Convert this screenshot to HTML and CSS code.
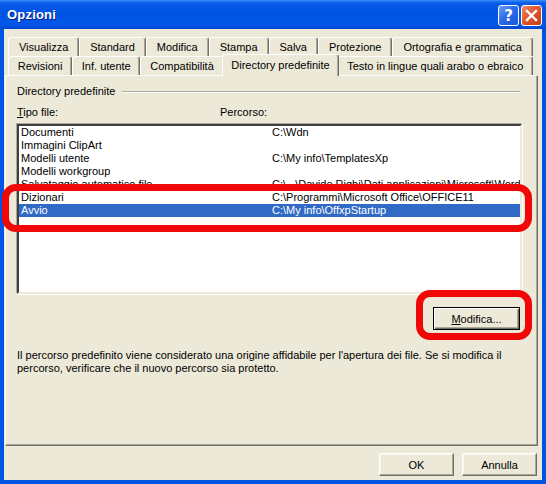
FILE: index.html
```html
<!DOCTYPE html>
<html lang="it">
<head>
<meta charset="utf-8">
<title>Opzioni</title>
<link rel="stylesheet" href="styles.css">
</head>
<body>
<div class="window">
  <div class="titlebar">
    <span class="title">Opzioni</span>
    <div class="title-btns">
      <span class="tbtn help">?</span>
      <span class="tbtn close"><svg width="13" height="13" viewBox="0 0 13 13"><path d="M2 2 L11 11 M11 2 L2 11" stroke="#fff" stroke-width="2.4" stroke-linecap="square"/></svg></span>
    </div>
  </div>
  <div class="frame">
    <div class="body">
      <div class="tabs">
        <div class="tabrow">
          <div class="tab">Visualizza</div>
          <div class="tab">Standard</div>
          <div class="tab">Modifica</div>
          <div class="tab">Stampa</div>
          <div class="tab">Salva</div>
          <div class="tab">Protezione</div>
          <div class="tab">Ortografia e grammatica</div>
        </div>
        <div class="tabrow">
          <div class="tab">Revisioni</div>
          <div class="tab">Inf. utente</div>
          <div class="tab">Compatibilità</div>
          <div class="tab active">Directory predefinite</div>
          <div class="tab">Testo in lingue quali arabo o ebraico</div>
        </div>
      </div>
      <div class="panel">
        <div class="group"><span>Directory predefinite</span><span class="rule"></span></div>
        <div class="headers"><span><u>T</u>ipo file:</span><span>Percorso:</span></div>
        <div class="list">
          <div class="row"><span>Documenti</span><span>C:\Wdn</span></div>
          <div class="row"><span>Immagini ClipArt</span><span></span></div>
          <div class="row"><span>Modelli utente</span><span>C:\My info\TemplatesXp</span></div>
          <div class="row"><span>Modelli workgroup</span><span></span></div>
          <div class="row"><span>Salvataggio automatico file</span><span>C:\...\Davide Righi\Dati applicazioni\Microsoft\Word</span></div>
          <div class="row"><span>Dizionari</span><span>C:\Programmi\Microsoft Office\OFFICE11</span></div>
          <div class="row selected"><span>Avvio</span><span>C:\My info\OffxpStartup</span></div>
        </div>
        <div class="actions"><button class="btn default wide"><u>M</u>odifica...</button></div>
        <p class="info">Il percorso predefinito viene considerato una origine affidabile per l'apertura dei file. Se si modifica il<br>percorso, verificare che il nuovo percorso sia protetto.</p>
      </div>
      <div class="footer">
        <button class="btn">OK</button>
        <button class="btn">Annulla</button>
      </div>
    </div>
  </div>
  <div class="mark mark-list"></div>
  <div class="mark mark-btn"></div>
</div>
</body>
</html>
```
FILE: styles.css
```css
* { box-sizing: border-box; margin: 0; padding: 0; }
html, body { width: 546px; height: 484px; overflow: hidden; }
body {
  font-family: "Liberation Sans", Arial, sans-serif;
  font-size: 11px;
  color: #000;
  background: #ECE9D8;
}
.window {
  position: relative;
  width: 546px;
  height: 484px;
  display: flex;
  flex-direction: column;
  background: #0054E3;
}
.titlebar {
  height: 29px;
  flex: 0 0 29px;
  display: flex;
  align-items: center;
  justify-content: space-between;
  padding: 0 4px 0 7px;
  background: linear-gradient(180deg, #3C8EF8 0%, #0A5CEB 10%, #0054E3 45%, #0257E8 85%, #0047D0 100%);
}
.title {
  color: #fff;
  font-weight: bold;
  font-size: 13px;
  text-shadow: 1px 1px 0 #0A1E8C;
  letter-spacing: 0.2px;
}
.title-btns { display: flex; gap: 2px; margin-top: 2px; }
.tbtn {
  width: 21px;
  height: 21px;
  border: 1px solid #fff;
  border-radius: 3px;
  display: flex;
  align-items: center;
  justify-content: center;
  color: #fff;
}
.help {
  background: linear-gradient(135deg, #6FA2F7 0%, #2B6BE6 45%, #1A56D8 100%);
  font-weight: bold;
  font-size: 15px;
  font-family: "DejaVu Sans", sans-serif;
}
.close {
  background: linear-gradient(135deg, #F0906E 0%, #E0552C 45%, #C83C14 100%);
}
.frame {
  flex: 1;
  display: flex;
  padding: 0 4px 4px 4px;
  background: #0054E3;
  min-width: 0;
}
.body {
  flex: 1;
  min-width: 0;
  overflow: hidden;
  display: flex;
  flex-direction: column;
  background: #ECE9D8;
  padding: 8px 4px 4px 1px;
}
.tabs { padding: 0 5px 0 3px; }
.tabrow { display: flex; height: 19px; }
.tab {
  flex: 1 1 auto;
  min-width: 0;
  white-space: nowrap;
  text-align: center;
  line-height: 17px;
  padding: 1px 3px 0;
  background: #ECE9D8;
  border-top: 1px solid #fff;
  border-left: 1px solid #fff;
  border-right: 1px solid #716F64;
  box-shadow: inset -1px 0 0 #ACA899;
  border-radius: 3px 3px 0 0;
}
.tab.active {
  position: relative;
  z-index: 1;
  margin: -2px -2px -1px;
  height: 22px;
  padding-top: 2px;
}
.panel {
  flex: 0 0 371px;
  border: 1px solid;
  border-color: #fff #716F64 #716F64 #fff;
  box-shadow: inset -1px -1px 0 #ACA899;
  padding: 9px 15px 0 11px;
  display: flex;
  flex-direction: column;
}
.group { display: flex; align-items: center; height: 13px; line-height: 13px; }
.group .rule {
  flex: 1;
  margin: 1px 2px 0 7px;
  border-top: 1px solid #ACA899;
  border-bottom: 1px solid #fff;
}
.headers {
  margin-top: 8px;
  height: 13px;
  line-height: 13px;
  display: grid;
  grid-template-columns: 203px 1fr;
}
.list {
  margin-top: 5px;
  height: 170px;
  background: #fff;
  border: 2px solid;
  border-color: #404040 #ECE9D8 #ECE9D8 #404040;
  box-shadow: 1px 1px 0 #fff, -1px -1px 0 #ACA899;
  overflow: hidden;
}
.row {
  display: grid;
  grid-template-columns: 251px 1fr;
  height: 13px;
  line-height: 13px;
  padding-left: 2px;
  white-space: nowrap;
  overflow: hidden;
}
.row.selected { background: #316AC5; color: #fff; }
.actions {
  margin-top: 13px;
  display: flex;
  justify-content: flex-end;
  padding-right: 2px;
}
.btn {
  width: 75px;
  height: 23px;
  font-family: "Liberation Sans", Arial, sans-serif;
  font-size: 11px;
  color: #000;
  background: #ECE9D8;
  border: 1px solid;
  border-color: #fff #716F64 #716F64 #fff;
  box-shadow: inset -1px -1px 0 #ACA899, inset 1px 1px 0 #F5F4EE;
}
.btn.wide { width: 87px; }
.btn.default {
  border: 1px solid #000;
  box-shadow: inset 1px 1px 0 #fff, inset -1px -1px 0 #716F64, inset -2px -2px 0 #ACA899;
}
.info {
  margin-top: 19px;
  line-height: 13px;
  white-space: nowrap;
}
.footer {
  margin-top: 7px;
  display: flex;
  justify-content: flex-end;
  gap: 8px;
  padding-right: 1px;
}
.mark {
  position: absolute;
  border: 7px solid #F00808;
  border-radius: 14px;
  pointer-events: none;
}
.mark-list { left: 2px; top: 184px; width: 530px; height: 48px; }
.mark-btn { left: 416px; top: 290px; width: 116px; height: 50px; }
```
